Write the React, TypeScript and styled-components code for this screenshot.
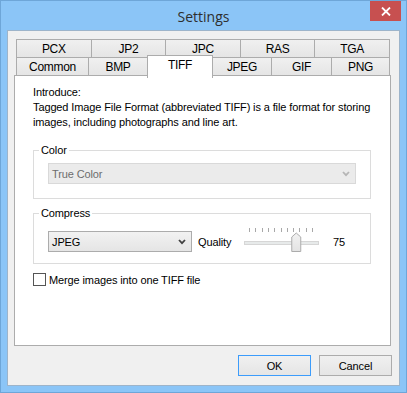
import React from "react";
import styled, { createGlobalStyle } from "styled-components";

const GlobalStyle = createGlobalStyle`
  html, body {
    margin: 0;
    padding: 0;
    background: #ffffff;
  }
  * {
    box-sizing: border-box;
  }
`;

const Window = styled.div`
  width: 407px;
  height: 393px;
  background: #8bc5f7;
  border: 1px solid #6ea6d8;
  display: flex;
  flex-direction: column;
  font-family: "Liberation Sans", Arial, sans-serif;
  font-size: 11px;
  letter-spacing: -0.12px;
  color: #000;
`;

const TitleBar = styled.div`
  height: 29px;
  display: grid;
  grid-template-columns: 1fr auto 1fr;
  align-items: center;
`;

const Title = styled.div`
  grid-column: 2;
  font-family: "Open Sans", "Noto Sans", sans-serif;
  font-size: 14px;
  letter-spacing: 0;
  color: #2e2e2e;
  padding-top: 1px;
`;

const CloseButton = styled.div`
  grid-column: 3;
  justify-self: end;
  align-self: start;
  width: 31px;
  height: 20px;
  margin-right: 5px;
  background: #c75050;
  display: flex;
  align-items: center;
  justify-content: center;
`;

const Client = styled.div`
  height: 356px;
  margin: 0 6px;
  background: #f0f0f0;
  border: 1px solid #9db4ca;
  padding: 8px 8px 0 6px;
  display: flex;
  flex-direction: column;
`;

const TabRow = styled.div<{ $first?: boolean }>`
  display: flex;
  height: 19px;
  margin: ${(p) => (p.$first ? "0" : "-1px")} 1px 0 2px;
`;

const Tab = styled.div<{ $w?: number; $active?: boolean }>`
  position: relative;
  ${(p) => (p.$w ? `width: ${p.$w}px;` : "flex: 1;")}
  display: flex;
  align-items: center;
  justify-content: center;
  font-size: 12px;
  letter-spacing: -0.3px;
  border: 1px solid #acacac;
  background: linear-gradient(#f0f0f0, #e5e5e5);
  & + & {
    margin-left: -1px;
  }
  ${(p) =>
    p.$active &&
    `
    z-index: 2;
    background: #ffffff;
    border-bottom: none;
    margin-top: -2px;
    margin-bottom: -2px;
    padding-bottom: 4px;
  `}
`;

const Panel = styled.div`
  height: 271px;
  margin-top: -1px;
  background: #ffffff;
  border: 1px solid #acacac;
  padding: 8px 19px 0 18px;
  display: flex;
  flex-direction: column;
`;

const Intro = styled.div`
  line-height: 16px;
`;

const Paragraph = styled.div`
  line-height: 15px;
  white-space: nowrap;
  margin-right: -19px;
`;

const Group = styled.fieldset<{ $top: number; $pad: string }>`
  margin: ${(p) => p.$top}px 0 0 0;
  padding: ${(p) => p.$pad};
  border: 1px solid #dcdcdc;
  min-inline-size: 0;
`;

const Legend = styled.legend`
  padding: 0 2px;
  margin-left: -9px;
  line-height: 14px;
`;

const Combo = styled.div<{ $w?: number; $disabled?: boolean }>`
  width: ${(p) => (p.$w ? `${p.$w}px` : "100%")};
  height: 21px;
  display: flex;
  align-items: center;
  justify-content: space-between;
  padding: 0 5px 0 3px;
  border: 1px solid ${(p) => (p.$disabled ? "#d9d9d9" : "#acacac")};
  background: ${(p) => (p.$disabled ? "#ebebeb" : "linear-gradient(#f2f2f2, #e5e5e5)")};
  color: ${(p) => (p.$disabled ? "#6d6d6d" : "#000")};
`;

const CompressRow = styled.div`
  height: 29px;
  display: flex;
  align-items: center;
`;

const QualityLabel = styled.div`
  width: 42px;
  margin-left: 6px;
`;

const Value = styled.div`
  margin-left: 11px;
`;

const CheckRow = styled.label`
  display: flex;
  align-items: center;
  margin-top: 9px;
  height: 13px;
`;

const CheckBox = styled.span`
  width: 13px;
  height: 13px;
  border: 1px solid #555;
  background: #fff;
  margin-right: 3px;
`;

const Buttons = styled.div`
  display: flex;
  justify-content: flex-end;
  gap: 8px;
  margin: 9px -1px 0 0;
`;

const Button = styled.div<{ $default?: boolean }>`
  width: 73px;
  height: 21px;
  display: flex;
  align-items: center;
  justify-content: center;
  border: 1px solid ${(p) => (p.$default ? "#3c9cfb" : "#acacac")};
  background: linear-gradient(#f0f0f0, #e5e5e5);
`;

function Chevron({ color }: { color: string }) {
  return (
    <svg width="8" height="6" viewBox="0 0 8 6">
      <path d="M1 1 L4 4.2 L7 1" fill="none" stroke={color} strokeWidth="1.8" />
    </svg>
  );
}

function Slider({ value }: { value: number }) {
  const ticks = Array.from({ length: 11 }, (_, i) => 9 + i * 6.3);
  const x = 9 + (value / 100) * 63;
  return (
    <svg width="82" height="29" viewBox="0 0 82 29">
      {ticks.map((t) => (
        <line key={t} x1={Math.round(t) + 0.5} y1="1" x2={Math.round(t) + 0.5} y2="5" stroke="#a8a8a8" />
      ))}
      <rect x="4.5" y="14.5" width="74" height="3" fill="#e7eaea" stroke="#d6d6d6" />
      <defs>
        <linearGradient id="thumb" x1="0" y1="0" x2="0" y2="1">
          <stop offset="0" stopColor="#f2f2f2" />
          <stop offset="1" stopColor="#e3e3e3" />
        </linearGradient>
      </defs>
      <path
        d={`M${x - 4.5} 24.5 L${x - 4.5} 10 L${x} 6 L${x + 4.5} 10 L${x + 4.5} 24.5 Z`}
        fill="url(#thumb)"
        stroke="#acacac"
      />
    </svg>
  );
}

const topTabs = ["PCX", "JP2", "JPC", "RAS", "TGA"];
const bottomTabs: [string, number][] = [
  ["Common", 73],
  ["BMP", 60],
  ["TIFF", 66],
  ["JPEG", 60],
  ["GIF", 61],
  ["PNG", 59],
];

export default function App() {
  return (
    <>
      <GlobalStyle />
      <Window>
        <TitleBar>
          <Title>Settings</Title>
          <CloseButton>
            <svg width="10" height="9" viewBox="0 0 10 9">
              <path d="M1 0.5 L9 8.5 M9 0.5 L1 8.5" stroke="#fff" strokeWidth="1.8" />
            </svg>
          </CloseButton>
        </TitleBar>
        <Client>
          <TabRow $first>
            {topTabs.map((t) => (
              <Tab key={t}>{t}</Tab>
            ))}
          </TabRow>
          <TabRow>
            {bottomTabs.map(([t, w]) => (
              <Tab key={t} $w={w} $active={t === "TIFF"}>
                {t}
              </Tab>
            ))}
          </TabRow>
          <Panel>
            <Intro>Introduce:</Intro>
            <Paragraph>
              Tagged Image File Format (abbreviated TIFF) is a file format for storing
              <br />
              images, including photographs and line art.
            </Paragraph>
            <Group $top={13} $pad="6px 14px 14px">
              <Legend>Color</Legend>
              <Combo $disabled>
                <span>True Color</span>
                <Chevron color="#b5b5b5" />
              </Combo>
            </Group>
            <Group $top={7} $pad="7px 14px 7px">
              <Legend>Compress</Legend>
              <CompressRow>
                <Combo $w={144}>
                  <span>JPEG</span>
                  <Chevron color="#404040" />
                </Combo>
                <QualityLabel>Quality</QualityLabel>
                <Slider value={75} />
                <Value>75</Value>
              </CompressRow>
            </Group>
            <CheckRow>
              <CheckBox />
              Merge images into one TIFF file
            </CheckRow>
          </Panel>
          <Buttons>
            <Button $default>OK</Button>
            <Button>Cancel</Button>
          </Buttons>
        </Client>
      </Window>
    </>
  );
}
